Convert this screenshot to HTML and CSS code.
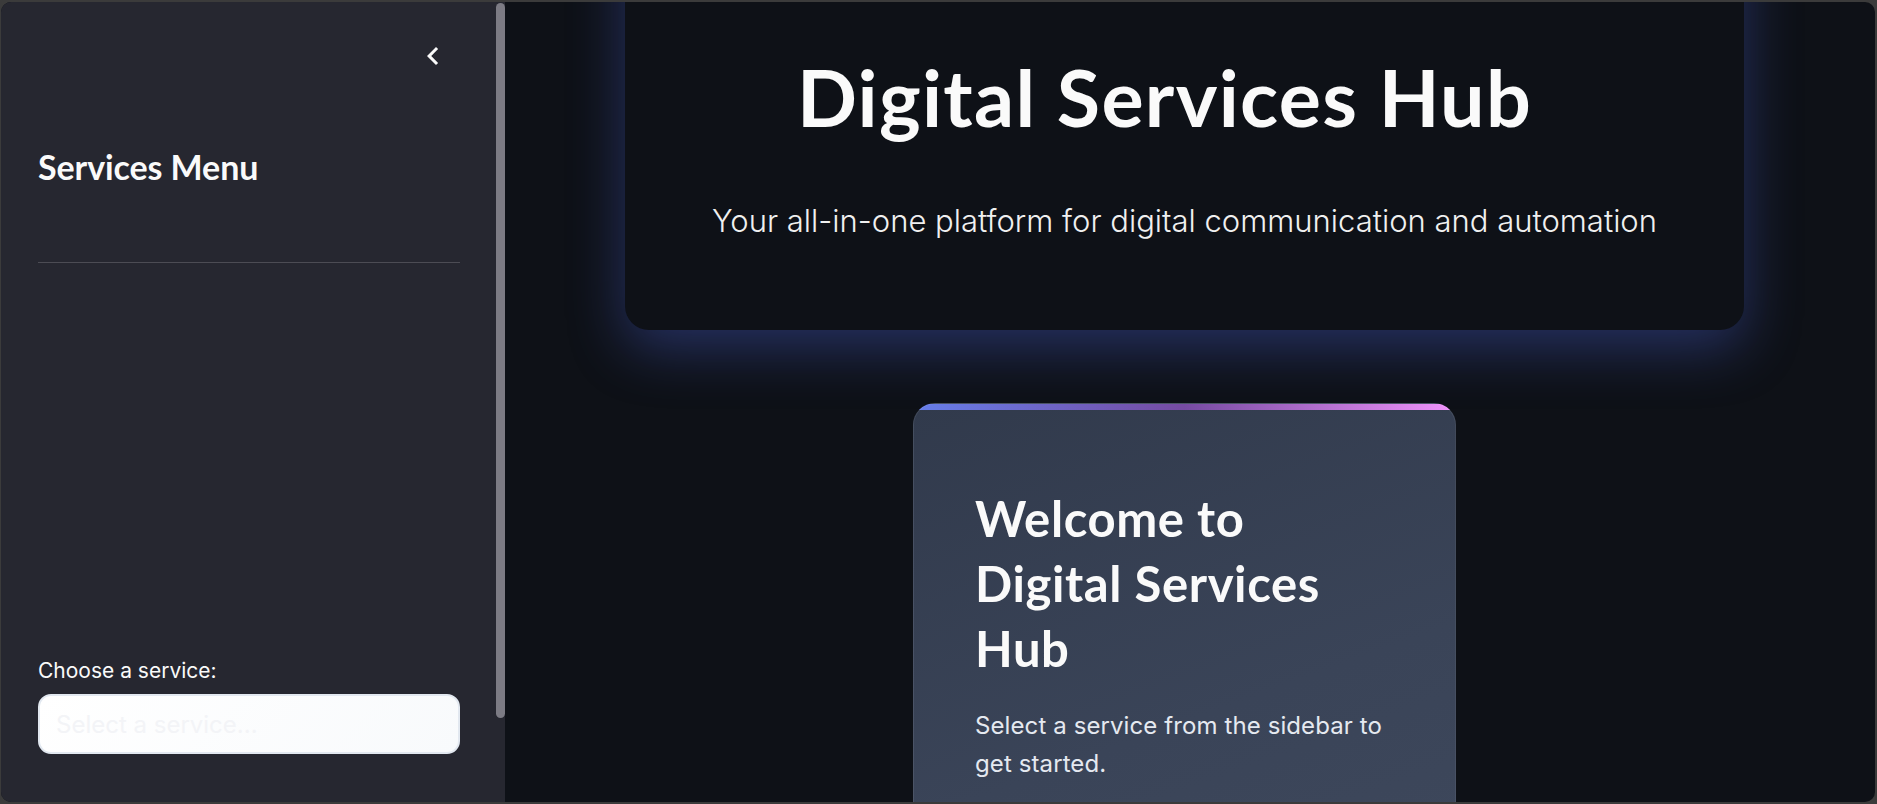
FILE: index.html
```html
<!DOCTYPE html>
<html lang="en">
<head>
<meta charset="utf-8">
<title>Digital Services Hub</title>
<link rel="stylesheet" href="styles.css">
</head>
<body>
<div class="window">
  <aside class="sidebar">
    <div class="sb-top">
      <svg class="collapse" viewBox="0 0 24 24" width="36" height="36" aria-hidden="true">
        <path d="M15.41 7.41L14 6l-6 6 6 6 1.41-1.41L10.83 12z" fill="#fafafa"/>
      </svg>
    </div>
    <h2 class="sb-title">Services Menu</h2>
    <hr class="sb-rule">
    <div class="sb-bottom">
      <label class="sb-label" for="svc">Choose a service:</label>
      <div class="select" id="svc"><span class="placeholder">Select a service...</span></div>
    </div>
    <div class="scroll-thumb"></div>
  </aside>
  <main class="main">
    <section class="hero">
      <h1 class="hero-title">Digital Services Hub</h1>
      <p class="hero-sub">Your all-in-one platform for digital communication and automation</p>
    </section>
    <section class="welcome">
      <h2 class="welcome-title">Welcome to Digital Services Hub</h2>
      <p class="welcome-text">Select a service from the sidebar to get started.</p>
    </section>
  </main>
</div>
</body>
</html>
```

FILE: styles.css
```css
* { box-sizing: border-box; }

html, body {
  margin: 0;
  padding: 0;
  height: 804px;
  overflow: hidden;
  background: #3b3b3b;
}

.window {
  margin: 2px 2px 2px 1px;
  height: 800px;
  border-radius: 10px;
  overflow: hidden;
  display: flex;
  background: #0e1117;
}

/* Sidebar */
.sidebar {
  position: relative;
  width: 504px;
  flex: 0 0 504px;
  background: #262730;
  display: flex;
  flex-direction: column;
  padding: 0 45px 48px 37px;
}

.sb-top {
  display: flex;
  justify-content: flex-end;
  padding-top: 36px;
  height: 72px;
}

.collapse {
  display: block;
  margin-right: 9px;
}

.sb-title {
  margin: 71px 0 0;
  font-family: "Lato", "Noto Sans", sans-serif;
  font-weight: 700;
  font-size: 34px;
  line-height: 43px;
  color: #fafafa;
  letter-spacing: -0.1px;
}

.sb-rule {
  margin: 74px 0 0;
  border: 0;
  height: 1px;
  background: rgba(250, 250, 250, 0.18);
}

.sb-bottom {
  margin-top: auto;
  display: flex;
  flex-direction: column;
}

.sb-label {
  font-family: "Inter", "Noto Sans", sans-serif;
  font-size: 21px;
  line-height: 31px;
  color: #fafafa;
  margin-bottom: 8px;
}

.select {
  height: 60px;
  border: 2px solid #e2e8f0;
  border-radius: 13px;
  background: linear-gradient(135deg, #ffffff 0%, #f8fafc 100%);
  display: flex;
  align-items: center;
  padding-left: 16px;
}

.placeholder {
  font-family: "Inter", "Noto Sans", sans-serif;
  font-size: 24px;
  color: #f3f4f7;
}

.scroll-thumb {
  position: absolute;
  right: 0;
  top: 1px;
  width: 9px;
  height: 715px;
  border-radius: 5px;
  background: #7c7b84;
}

/* Main */
.main {
  flex: 1;
  display: flex;
  flex-direction: column;
  align-items: center;
  padding-right: 11px;
  overflow: hidden;
}

.hero {
  flex: 0 0 auto;
  width: 1119px;
  margin-top: -100px;
  padding: 148px 40px 87px;
  border-radius: 24px;
  background: #0e1117;
  box-shadow: 0 18px 55px rgba(80, 105, 230, 0.36);
  text-align: center;
}

.hero-title {
  margin: 0;
  padding-right: 40px;
  font-family: "Lato", "Noto Sans", sans-serif;
  font-weight: 700;
  font-size: 79px;
  line-height: 94px;
  color: #fafafa;
  letter-spacing: 1.3px;
}

.hero-sub {
  margin: 54px 0 0;
  font-family: "Inter", "Noto Sans", sans-serif;
  font-weight: 300;
  font-size: 31px;
  line-height: 45px;
  color: #f0f0f0;
}

.welcome {
  flex: 0 0 auto;
  width: 543px;
  margin-top: 73px;
  padding: 82px 70px 120px 61px;
  border: 1px solid rgba(255, 255, 255, 0.08);
  border-radius: 22px;
  background:
    linear-gradient(90deg, #667eea 0%, #764ba2 50%, #f093fb 100%) top / 100% 6px no-repeat,
    linear-gradient(160deg, #313a4c 0%, #3a4458 60%, #3e485c 100%);
}

.welcome-title {
  margin: 0;
  font-family: "Lato", "Noto Sans", sans-serif;
  font-weight: 700;
  font-size: 49px;
  line-height: 65px;
  letter-spacing: 0.6px;
  color: #fafafa;
}

.welcome-text {
  margin: 26px 0 0;
  font-family: "Inter", "Noto Sans", sans-serif;
  font-size: 24px;
  line-height: 38px;
  letter-spacing: 0.1px;
  color: #e5e9f0;
}
```
